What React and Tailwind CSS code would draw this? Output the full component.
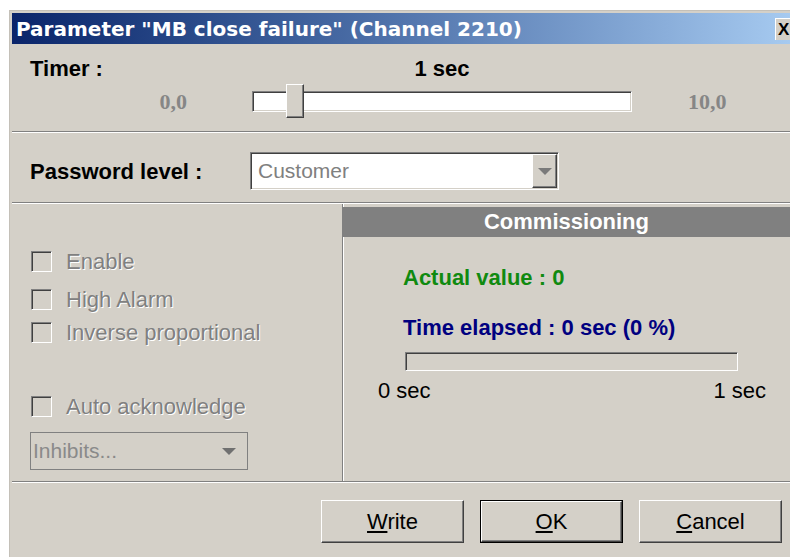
import React from 'react';

// classic 3D bevels used by the dialog controls
const RAISED = 'border border-t-white border-l-white border-r-[#404040] border-b-[#404040] shadow-[inset_-1px_-1px_0_#808080] bg-[#d4d0c8]';
const SUNKEN = 'border border-t-[#808080] border-l-[#808080] border-r-white border-b-white shadow-[inset_1px_1px_0_#404040,inset_-1px_-1px_0_#d4d0c8]';
const DISABLED = 'text-[#808080] [text-shadow:1px_1px_0_#ffffff]';

const OPTIONS = [
  { id: 'enable', label: 'Enable', gap: 'mt-0' },
  { id: 'high_alarm', label: 'High Alarm', gap: 'mt-[17px]' },
  { id: 'inverse', label: 'Inverse proportional', gap: 'mt-[12px]' },
  { id: 'auto_ack', label: 'Auto acknowledge', gap: 'mt-[53px]' },
];

function Separator() {
  return <div className="h-[2px] border-t border-t-[#808080] border-b border-b-white" />;
}

function Triangle({ color = 'border-t-[#808080]' }) {
  return <div className={`w-0 h-0 border-l-[7px] border-r-[7px] border-t-[7px] border-l-transparent border-r-transparent ${color}`} />;
}

function CheckOption({ label, gap }) {
  return (
    <div className={`flex items-center h-[21px] ${gap}`}>
      <div className={`w-[21px] h-[21px] ${SUNKEN} bg-[#d4d0c8]`} />
      <span className={`ml-[14px] text-[22px] leading-[22px] ${DISABLED}`}>{label}</span>
    </div>
  );
}

function DialogButton({ label, isDefault }) {
  const text = (
    <span className="text-[22px] leading-none text-black">
      <span className="underline underline-offset-2">{label[0]}</span>
      {label.slice(1)}
    </span>
  );
  if (isDefault) {
    return (
      <div className="w-[143px] h-[43px] border border-black">
        <div className={`w-full h-full flex items-center justify-center ${RAISED}`}>{text}</div>
      </div>
    );
  }
  return <div className={`w-[143px] h-[43px] flex items-center justify-center ${RAISED}`}>{text}</div>;
}

export default function App() {
  return (
    <div className="w-[790px] h-[557px] overflow-hidden bg-white font-['Liberation_Sans',Arial,sans-serif]">
      <div className="ml-[9px] mt-[10px] w-[781px] h-[560px] border-l border-t border-[#c4c0b8] pl-[2px] pt-[2px] bg-[#d4d0c8]">
        {/* title bar */}
        <div className="h-[31px] flex items-center bg-gradient-to-r from-[#0a246a] to-[#a6caf0] pl-[4px]">
          <span className="text-white font-bold text-[20px] leading-none font-['DejaVu_Sans',Verdana,sans-serif] whitespace-nowrap">
            Parameter "MB close failure" (Channel 2210)
          </span>
          <div className="ml-auto w-[15px] h-[22px] bg-[#d4d0c8] border-t border-l border-white overflow-hidden flex items-center pl-[2px]">
            <span className="text-[17px] leading-none font-bold text-black">X</span>
          </div>
        </div>

        {/* timer */}
        <div className="mt-[14px] grid grid-cols-[240px_380px_1fr]">
          <div className="pl-[18px] text-[22px] leading-[22px] font-bold text-black">Timer :</div>
          <div className="text-center text-[22px] leading-[22px] font-bold text-black">1 sec</div>
          <div />
          <div className="mt-[4px] h-[34px] flex items-center justify-end pr-[65px] font-['Liberation_Serif',serif] font-bold text-[22px] text-[#868686]">0,0</div>
          <div className="mt-[4px] h-[34px] relative flex items-center">
            <div className={`w-full h-[21px] bg-white ${SUNKEN}`} />
            <div className={`absolute left-[34px] top-0 w-[18px] h-[34px] ${RAISED}`} />
          </div>
          <div className="mt-[4px] h-[34px] flex items-center pl-[56px] font-['Liberation_Serif',serif] font-bold text-[22px] text-[#868686]">10,0</div>
        </div>

        <div className="mt-[13px]">
          <Separator />
        </div>

        {/* password level */}
        <div className="mt-[19px] h-[38px] flex items-center">
          <div className="w-[238px] pl-[18px] text-[22px] font-bold text-black">Password level :</div>
          <div className={`w-[309px] h-[38px] bg-white flex ${SUNKEN} p-[1px]`}>
            <div className="flex-1 flex items-center pl-[6px] text-[21px] text-[#808080]">Customer</div>
            <div className={`w-[25px] h-full flex items-center justify-center ${RAISED}`}>
              <Triangle color="border-t-[#7a7a7a]" />
            </div>
          </div>
        </div>

        <div className="mt-[12px]">
          <Separator />
        </div>

        {/* options and commissioning */}
        <div className="h-[277px] flex">
          <div className="w-[330px] pt-[47px] pl-[19px]">
            {OPTIONS.map(opt => (
              <CheckOption key={opt.id} label={opt.label} gap={opt.gap} />
            ))}
            <div className="mt-[15px] -ml-[1px] w-[218px] h-[38px] border border-[#808080] flex items-center">
              <span className="pl-[2px] text-[21px] text-[#8a8a8a]">Inhibits...</span>
              <div className="ml-auto mr-[11px]">
                <Triangle color="border-t-[#707070]" />
              </div>
            </div>
          </div>

          <div className="flex-1 border-l border-l-[#808080] shadow-[inset_1px_0_0_#ffffff]">
            <div className="mt-[3px] h-[30px] bg-[#808080] text-center text-white font-bold text-[22px] leading-[30px]">
              Commissioning
            </div>
            <div className="mt-[30px] pl-[60px] text-[22px] leading-[22px] font-bold text-[#108a10]">Actual value : 0</div>
            <div className="mt-[28px] pl-[60px] text-[22px] leading-[22px] font-bold text-[#000080]">Time elapsed : 0 sec (0 %)</div>
            <div className={`mt-[13px] ml-[62px] w-[333px] h-[19px] ${SUNKEN}`} />
            <div className="mt-[9px] ml-[35px] w-[388px] flex justify-between text-[22px] leading-[22px] text-black">
              <span>0 sec</span>
              <span>1 sec</span>
            </div>
          </div>
        </div>

        <Separator />

        {/* buttons */}
        <div className="mt-[17px] flex justify-end gap-[16px] pr-[8px]">
          <DialogButton label="Write" />
          <DialogButton label="OK" isDefault />
          <DialogButton label="Cancel" />
        </div>
      </div>
    </div>
  );
}
